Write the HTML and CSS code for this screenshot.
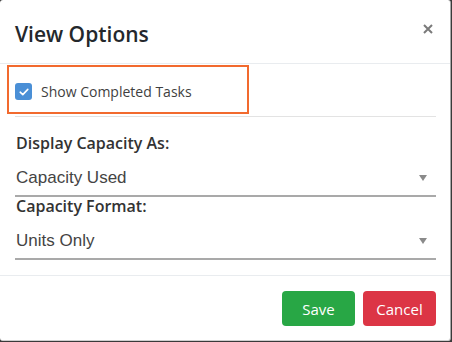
FILE: index.html
```html
<!DOCTYPE html>
<html>
<head>
<meta charset="utf-8">
<link rel="stylesheet" href="styles.css">
</head>
<body>
<div class="modal">
  <div class="modal-header">
    <h5 class="title">View Options</h5>
    <svg class="close" width="10" height="10" viewBox="0 0 10 10"><path d="M1 1 L9 9 M9 1 L1 9" stroke="#7a7a7a" stroke-width="2" stroke-linecap="butt"/></svg>
  </div>
  <div class="modal-body">
    <div class="check-row">
      <span class="checkbox">
        <svg width="10" height="8" viewBox="0 0 10 8"><path d="M1.2 4.2 L3.8 6.6 L8.8 1.4" fill="none" stroke="#fff" stroke-width="1.6" stroke-linecap="round" stroke-linejoin="round"/></svg>
      </span>
      <span class="check-label">Show Completed Tasks</span>
    </div>
    <div class="field first">
      <div class="field-label">Display Capacity As:</div>
      <div class="select"><span>Capacity Used</span><span class="arrow"></span></div>
    </div>
    <div class="field">
      <div class="field-label">Capacity Format:</div>
      <div class="select"><span>Units Only</span><span class="arrow"></span></div>
    </div>
  </div>
  <div class="modal-footer">
    <button class="btn btn-save">Save</button>
    <button class="btn btn-cancel">Cancel</button>
  </div>
</div>
</body>
</html>
```

FILE: styles.css
```css
html, body {
  margin: 0;
  padding: 0;
  background: #3a3a3a;
  width: 452px;
  height: 342px;
  overflow: hidden;
}
.modal {
  width: 451px;
  height: 341px;
  box-sizing: border-box;
  background: #fff;
  border-right: 1px solid #a8a8a8;
  border-bottom: 1px solid #cfcfcf;
  border-radius: 3px;
  font-family: "Open Sans", sans-serif;
  color: #212529;
  display: flex;
  flex-direction: column;
}
.modal-header {
  height: 64px;
  box-sizing: border-box;
  display: flex;
  align-items: flex-start;
  justify-content: space-between;
  padding: 0 17px 0 15px;
  border-bottom: 1px solid #e9ecef;
}
.title {
  margin: 0;
  font-size: 21px;
  font-weight: 600;
  color: #24282c;
  line-height: 21px;
  padding-top: 24px;
}
.close {
  display: block;
  margin-top: 24px;
}
.modal-body {
  padding: 0 14px 15px 15px;
}
.check-row {
  height: 53px;
  box-sizing: border-box;
  display: flex;
  align-items: center;
  gap: 9px;
  padding-top: 3px;
  border-bottom: 1px solid #e3e3e3;
  position: relative;
}
.check-row::before {
  content: "";
  position: absolute;
  left: -8px;
  top: 1px;
  width: 242px;
  height: 49px;
  box-sizing: border-box;
  border: 2px solid #f26a2e;
}
.checkbox {
  width: 17px;
  height: 17px;
  border-radius: 3px;
  background: #4a8fd6;
  display: inline-flex;
  align-items: center;
  justify-content: center;
}
.check-label {
  font-size: 14px;
  color: #3f3f3f;
}
.field {
  display: flex;
  flex-direction: column;
}
.field.first { padding-top: 17px; }
.field-label {
  font-size: 16px;
  font-weight: 600;
  color: #333;
  line-height: 18px;
  padding-left: 1px;
}
.select {
  height: 45px;
  box-sizing: border-box;
  border-bottom: 2px solid #a9a9a9;
  display: flex;
  align-items: center;
  justify-content: space-between;
  font-family: "Liberation Sans", Arial, sans-serif;
  font-size: 17px;
  color: #444;
  padding: 9px 9px 0 1px;
}
.arrow {
  width: 0;
  height: 0;
  border-left: 4px solid transparent;
  border-right: 4px solid transparent;
  border-top: 6px solid #8a8a8a;
}
.modal-footer {
  flex: 1;
  box-sizing: border-box;
  border-top: 1px solid #e9ecef;
  display: flex;
  justify-content: flex-end;
  align-items: flex-start;
  gap: 8px;
  padding: 15px 14px 0 0;
}
.btn {
  height: 35px;
  border: none;
  border-radius: 4px;
  color: #fff;
  font-family: "Open Sans", sans-serif;
  font-size: 15px;
  padding: 0;
}
.btn-save { width: 73px; background: #28a745; }
.btn-cancel { width: 73px; background: #dc3545; }
```
